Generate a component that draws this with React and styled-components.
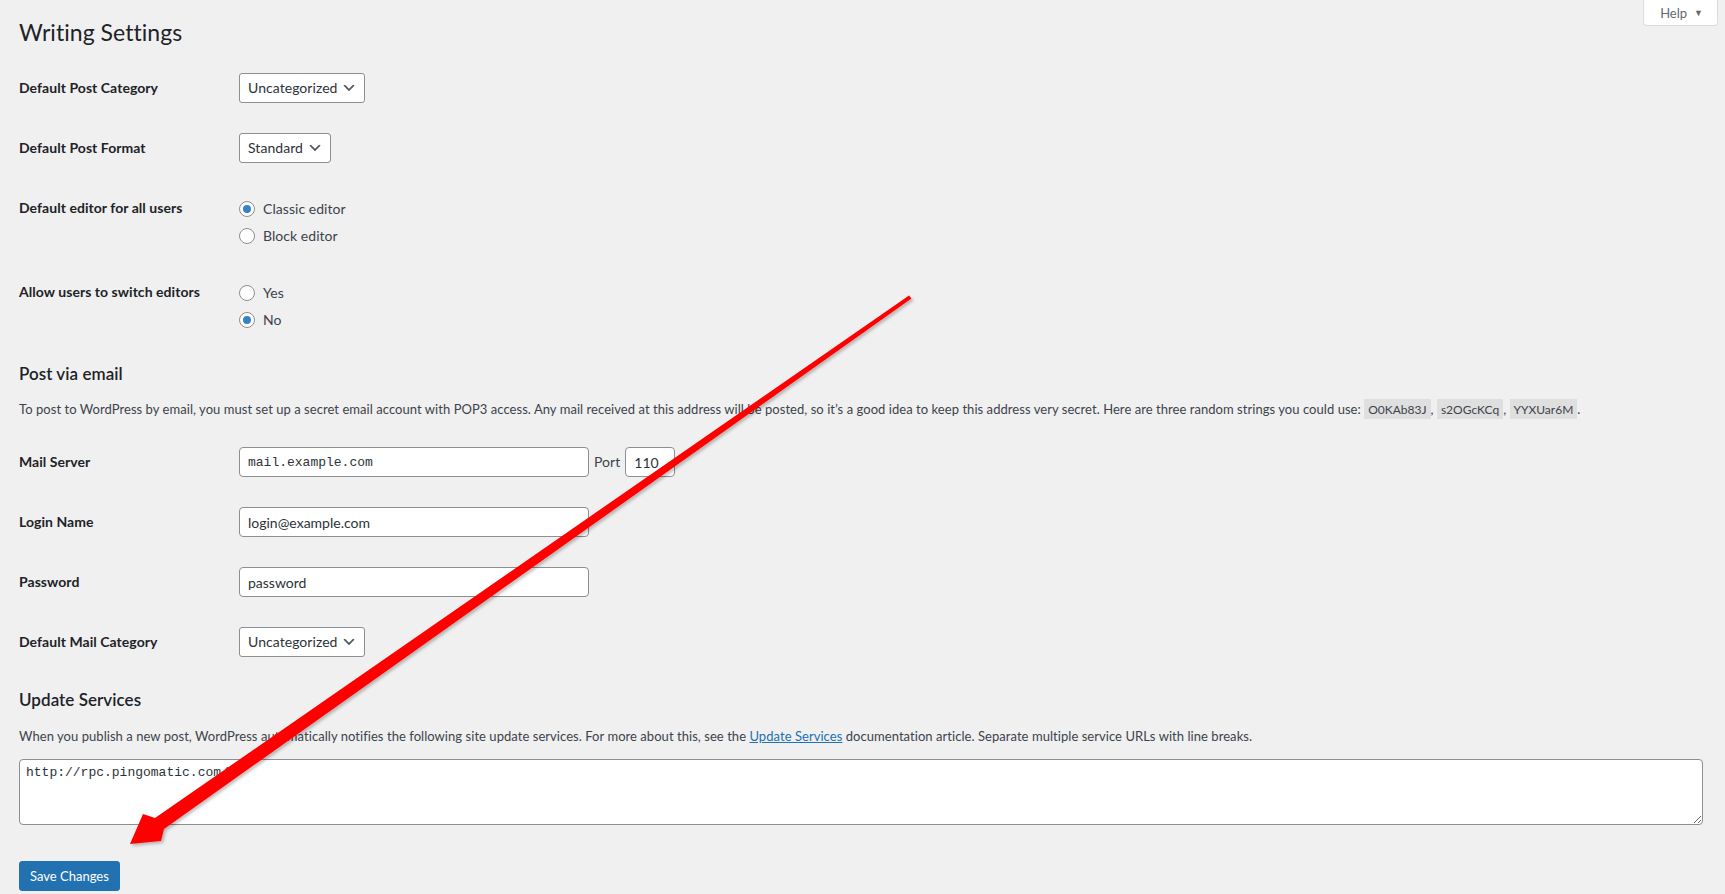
import React from "react";
import styled, { createGlobalStyle } from "styled-components";

const GlobalStyle = createGlobalStyle`
  body {
    margin: 0;
    background: #f0f0f1;
    color: #3c434a;
    font-family: Lato, "Noto Sans", sans-serif;
    font-size: 13px;
    letter-spacing: 0.05px;
  }
  * { box-sizing: border-box; }
`;

const Page = styled.div`
  position: relative;
  padding: 0 22px 0 19px;
  min-height: 894px;
`;

const Header = styled.div`
  display: flex;
  justify-content: space-between;
  align-items: flex-start;
  margin-right: -15px;
`;

const Title = styled.h1`
  margin: 0;
  padding: 18px 0 4px;
  font-size: 23px;
  font-weight: 400;
  line-height: 1.3;
  color: #1d2327;
`;

const HelpTab = styled.button`
  display: flex;
  align-items: center;
  gap: 7px;
  height: 26px;
  padding: 0 14px 0 16px;
  background: #fff;
  border: 1px solid #dcdcde;
  border-top: none;
  border-radius: 0 0 4px 4px;
  color: #646970;
  font: inherit;
  font-size: 13px;
  span {
    font-size: 9px;
  }
`;

const FormTable = styled.table`
  width: 100%;
  border-collapse: collapse;
  margin-top: ${(p) => p.$top || 0}px;
`;

const Th = styled.th`
  width: 210px;
  padding: 21px 10px 19px 0;
  text-align: left;
  vertical-align: top;
  font-size: 14px;
  font-weight: 700;
  line-height: 1.3;
  color: #1d2327;
`;

const Td = styled.td`
  padding: 15px 10px;
  vertical-align: top;
  font-size: 14px;
  line-height: 1.3;
`;

const SelectBox = styled.div`
  display: inline-flex;
  align-items: center;
  gap: 4px;
  height: 30px;
  padding: 0 7px 0 8px;
  background: #fff;
  border: 1px solid #8c8f94;
  border-radius: 3px;
  color: #2c3338;
  font-size: 14px;
`;

const RadioGroup = styled.div`
  display: flex;
  flex-direction: column;
  gap: 5px;
  padding-top: 5px;
`;

const RadioLabel = styled.label`
  display: flex;
  align-items: center;
  gap: 8px;
  height: 22px;
  color: #3c434a;
  font-size: 14px;
`;

const RadioDot = styled.span`
  position: relative;
  width: 16px;
  height: 16px;
  border: 1px solid #8c8f94;
  border-radius: 50%;
  background: #fff;
  &::after {
    content: "";
    display: ${(p) => (p.$checked ? "block" : "none")};
    position: absolute;
    left: 3px;
    top: 3px;
    width: 8px;
    height: 8px;
    border-radius: 50%;
    background: #3582c4;
  }
`;

const SectionTitle = styled.h2`
  margin: 17px 0 15px;
  font-size: 17px;
  font-weight: 600;
  line-height: 1.3;
  color: #1d2327;
`;

const Note = styled.p`
  margin: 15px 0 13px;
  font-size: 13px;
  line-height: 1.5;
  color: #3c434a;
`;

const Code = styled.code`
  padding: 3px 4px 2px;
  background: rgba(0, 0, 0, 0.07);
  font-family: inherit;
  font-size: 12px;
  letter-spacing: 0;
`;

const Link = styled.a`
  color: #2271b1;
  text-decoration: underline;
`;

const InlineRow = styled.div`
  display: flex;
  align-items: center;
  gap: 5px;
  color: #3c434a;
  font-size: 14px;
`;

const TextInput = styled.input`
  width: ${(p) => p.$width || 350}px;
  height: 30px;
  padding: 0 8px;
  background: #fff;
  border: 1px solid #8c8f94;
  border-radius: 4px;
  color: #2c3338;
  font-family: ${(p) => (p.$mono ? '"Liberation Mono", monospace' : "inherit")};
  font-size: ${(p) => (p.$mono ? 13 : 14)}px;
`;

const CodeArea = styled.textarea`
  display: block;
  width: 100%;
  height: 66px;
  padding: 4px 6px;
  background: #fff;
  border: 1px solid #8c8f94;
  border-radius: 4px;
  color: #2c3338;
  font-family: "Liberation Mono", monospace;
  font-size: 13px;
  line-height: 1.4;
`;

const Submit = styled.div`
  padding-top: 36px;
`;

const PrimaryButton = styled.button`
  height: 30px;
  padding: 0 10px;
  background: #2271b1;
  border: 1px solid #2271b1;
  border-radius: 3px;
  color: #fff;
  font: inherit;
  font-size: 13px;
`;

const Overlay = styled.svg`
  position: absolute;
  left: 0;
  top: 0;
  pointer-events: none;
`;

const Chevron = () => (
  <svg width="16" height="16" viewBox="0 0 20 20">
    <path d="M5 6l5 5 5-5 2 1-7 7-7-7 2-1z" fill="#50575e" />
  </svg>
);

const Select = ({ value }) => (
  <SelectBox>
    {value}
    <Chevron />
  </SelectBox>
);

const Radio = ({ checked, children }) => (
  <RadioLabel>
    <RadioDot $checked={checked} />
    {children}
  </RadioLabel>
);

const Row = ({ label, children }) => (
  <tr>
    <Th>{label}</Th>
    <Td>{children}</Td>
  </tr>
);

export default function App() {
  return (
    <Page>
      <GlobalStyle />
      <Header>
        <Title>Writing Settings</Title>
        <HelpTab>
          Help <span>▼</span>
        </HelpTab>
      </Header>

      <FormTable $top={6}>
        <tbody>
          <Row label="Default Post Category">
            <Select value="Uncategorized" />
          </Row>
          <Row label="Default Post Format">
            <Select value="Standard" />
          </Row>
          <Row label="Default editor for all users">
            <RadioGroup>
              <Radio checked>Classic editor</Radio>
              <Radio>Block editor</Radio>
            </RadioGroup>
          </Row>
          <Row label="Allow users to switch editors">
            <RadioGroup>
              <Radio>Yes</Radio>
              <Radio checked>No</Radio>
            </RadioGroup>
          </Row>
        </tbody>
      </FormTable>

      <SectionTitle>Post via email</SectionTitle>
      <Note>
        To post to WordPress by email, you must set up a secret email account with POP3 access. Any mail
        received at this address will be posted, so it’s a good idea to keep this address very secret. Here
        are three random strings you could use: <Code>O0KAb83J</Code>, <Code>s2OGcKCq</Code>,{" "}
        <Code>YYXUar6M</Code>.
      </Note>

      <FormTable>
        <tbody>
          <Row label="Mail Server">
            <InlineRow>
              <TextInput $mono defaultValue="mail.example.com" />
              Port
              <TextInput $width={50} defaultValue="110" />
            </InlineRow>
          </Row>
          <Row label="Login Name">
            <TextInput defaultValue="login@example.com" />
          </Row>
          <Row label="Password">
            <TextInput defaultValue="password" />
          </Row>
          <Row label="Default Mail Category">
            <Select value="Uncategorized" />
          </Row>
        </tbody>
      </FormTable>

      <SectionTitle>Update Services</SectionTitle>
      <Note>
        When you publish a new post, WordPress automatically notifies the following site update services. For
        more about this, see the <Link href="#">Update Services</Link> documentation article. Separate multiple
        service URLs with line breaks.
      </Note>
      <CodeArea defaultValue="http://rpc.pingomatic.com/" />

      <Submit>
        <PrimaryButton>Save Changes</PrimaryButton>
      </Submit>

      <Overlay width="1725" height="894" viewBox="0 0 1725 894">
        <defs>
          <filter id="arrowShadow" x="-5%" y="-5%" width="110%" height="110%">
            <feDropShadow dx="2" dy="2" stdDeviation="1.5" floodColor="#000" floodOpacity="0.25" />
          </filter>
        </defs>
        <polygon
          points="909,295.5 911.5,298.5 164,829 161,841 130,844 143,814 155,818"
          fill="#ff0000"
          filter="url(#arrowShadow)"
        />
      </Overlay>
    </Page>
  );
}
